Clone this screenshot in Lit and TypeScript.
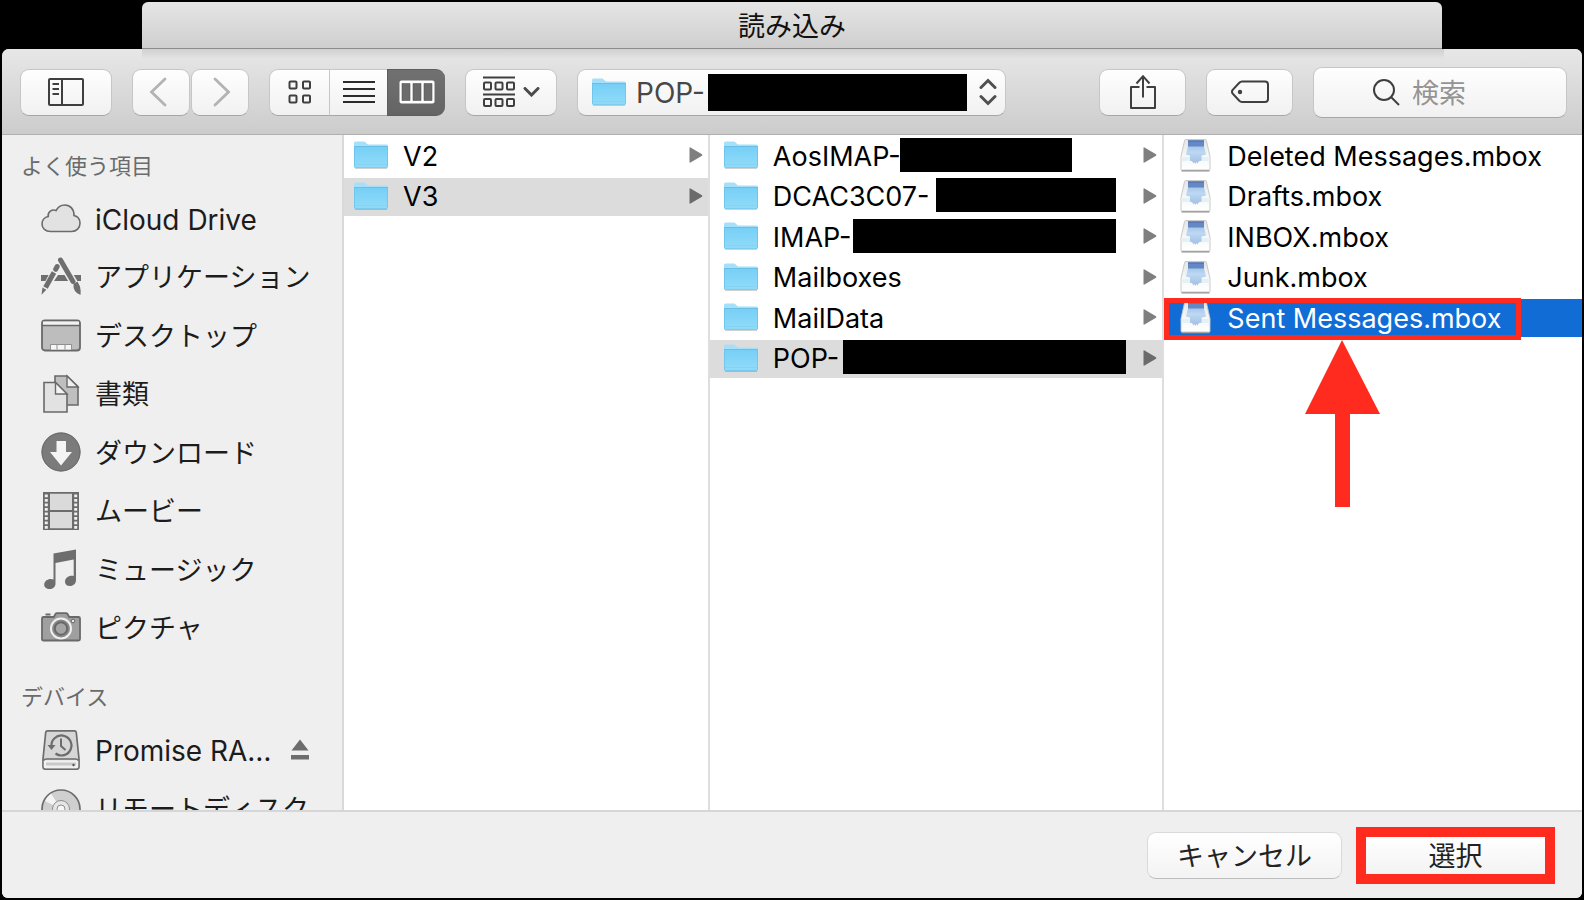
import { LitElement, html, css, svg, nothing } from "lit";
import { customElement, property, state } from "lit/decorators.js";
import { classMap } from "lit/directives/class-map.js";
import { styleMap } from "lit/directives/style-map.js";

const folderIcon = () => html`
  <svg class="folder" width="34" height="28" viewBox="0 0 34 28" aria-hidden="true">
    <defs>
      <linearGradient id="f" x1="0" y1="0" x2="0" y2="1">
        <stop offset="0" stop-color="#76cff5" />
        <stop offset="1" stop-color="#92dcfa" />
      </linearGradient>
    </defs>
    <path d="M1 27.5h32" stroke="#000" stroke-opacity=".18" stroke-width="1" />
    <path d="M0 2Q0 .5 1.5 .5h8.2q1 0 1.700 .7l1.600 1.600q.7 .6 1.700 .6H32.500q1.500 0 1.500 1.500V8H0z" fill="#a5dffa" />
    <path d="M0 5.500H34V25.500q0 1.300-1.300 1.300H1.300Q0 26.800 0 25.500z" fill="url(#f)" />
    <path d="M0 5.500H34" stroke="#69bfe6" />
    <path d="M0 23.500H34" stroke="#7fd0f3" stroke-opacity=".7" />
    <path d="M.5 6v19.500q0 .9 .9 .9H32.600q.9 0 .9-.9V6" fill="none" stroke="#6cc3ea" stroke-opacity=".8" />
  </svg>`;

const mailboxIcon = () => html`
  <svg class="mailbox" width="34" height="34" viewBox="0 0 34 34" aria-hidden="true">
    <defs>
      <linearGradient id="m" x1="0" y1="0" x2="0" y2="1">
        <stop offset="0" stop-color="#e4e4e4" />
        <stop offset=".5" stop-color="#f4f6f7" />
        <stop offset="1" stop-color="#fff" />
      </linearGradient>
      <linearGradient id="w" x1="0" y1="0" x2="0" y2="1">
        <stop offset="0" stop-color="#8fb4e2" />
        <stop offset=".5" stop-color="#bdd8f2" />
        <stop offset="1" stop-color="#9fbde6" />
      </linearGradient>
    </defs>
    <path d="M3.500 32.700h28" stroke="#8b8b8b" stroke-width="1.500" />
    <path d="M7.500 1.500h20q.8 0 .9 .9L32 18.500V31.200q0 .8-.8 .8H3.800q-.8 0-.8-.8V18.500L6.600 2.400q.1-.9 .9-.9z" fill="url(#m)" stroke="#c4c4c4" stroke-width=".9" />
    <path d="M3.500 19h28v4h-28z" fill="#e6f1f5" />
    <path d="M10 2.500h16V8.500L28 16.500 23.500 17.500V22.500L20.500 23.500 19.500 25.500 18.500 24 17.500 26 16.500 24 15.500 25.500 14.500 23.500 12 22.500V17.500L8 16.500 10 8.500z" fill="url(#w)" />
    <path d="M10 2.500h16V8.500H10z" fill="#6488c4" />
    <path d="M10 3h16" stroke="#4c6ba5" />
  </svg>`;

const sidebarIcons: Record<string, unknown> = {
  cloud: svg`<path d="M9.500 33.500C4.500 33.500 1 30.200 1 26c0-3.800 2.600-6.800 6.200-7.500C6.500 14 11 10.800 15 12.600 17 8.700 20.300 7 23.800 7c5.400 0 9.400 4.200 9.200 10.500 3.600 .8 6 3.900 6 7.800 0 4.700-3.500 8.200-8.300 8.200z" fill="#e2e2e2" stroke="#6b6b6b" stroke-width="1.600"/>`,
  apps: svg`<path d="M0 18h11v6H0zM29 18h11v6H29zM17 18h8l3 6H13z" fill="#6e6e6e"/>
    <path d="M19.500 3.500L33.500 27" stroke="#efefef" stroke-width="8"/><path d="M19.500 3L32 24.500" stroke="#6e6e6e" stroke-width="5" stroke-linecap="round"/>
    <path d="M32.500 27l4-2.500 2.500 5q1 4 .5 8.500-4-1.500-5.500-4-2-3-1.500-7z" fill="#6e6e6e"/>
    <path d="M17 8L2 36" stroke="#efefef" stroke-width="7"/><path d="M16.200 9.500l-1.500 2.800" stroke="#6e6e6e" stroke-width="5" stroke-linecap="round"/><path d="M13 15.500L4.500 30.500" stroke="#6e6e6e" stroke-width="5"/><path d="M1.500 30.500l3.800 2.200-4.800 5z" fill="#6e6e6e"/>`,
  desktop: svg`<rect x="1" y="5.500" width="38" height="30" rx="3" fill="#bdbdbd" stroke="#696969" stroke-width="1.800"/><path d="M2 6.500h36V10H2z" fill="#f2f2f2"/><path d="M1 10.500h38" stroke="#696969" stroke-width="1.500"/><path d="M10 30h20v4.600H10z" fill="#f6f6f6"/><path d="M9.500 34.600V29.500h21v5.100M16 30v4.600M24 30v4.600" fill="none" stroke="#909090"/>`,
  docs: svg`<path d="M14 2h12l11 10.500V31H14z" fill="#bfbfbf" stroke="#696969" stroke-width="1.600"/><path d="M26 2v11h11z" fill="#efefef" stroke="#696969" stroke-width="1.400"/><path d="M3 8.500h11.500L26 20V38H3z" fill="#e2e2e2" stroke="#696969" stroke-width="1.600"/><path d="M14.500 8.500V20H26z" fill="#f3f3f3" stroke="#696969" stroke-width="1.400"/>`,
  downloads: svg`<circle cx="20" cy="20" r="19.500" fill="#7b7b7b"/><circle cx="20" cy="20" r="19" fill="none" stroke="#6a6a6a"/><path d="M15.500 9h9.500v11h6L20 33.500 9 20h6.500z" fill="#f4f4f4"/>`,
  movies: svg`<rect x="2" y="1" width="36" height="38" fill="#6c6c6c"/><path d="M9 2.800h22v16.200H9zM9 21h22v16.200H9z" fill="#dadada"/><path d="M5.300 3.500V38M34.700 3.500V38" stroke="#f0f0f0" stroke-width="3" stroke-dasharray="2.800 1.700"/>`,
  music: svg`<path d="M12.500 4.500L35 .500V31c0 3.500-2.500 6-6 6-3 0-5-1.500-5-4.300 0-3.500 3.200-6 6.500-6 .9 0 1.500 .1 2.200 .4V10.500L14.500 14v20.500c0 3.500-2.500 5.500-6 5.500-3 0-5.300-1.500-5.300-4.200 0-3.400 3-5.800 6.800-5.800 .9 0 1.700 .2 2.500 .5z" fill="#6e6e6e"/>`,
  pictures: svg`<path d="M4.500 6.500h5" stroke="#696969" stroke-width="2"/><path d="M2.500 9h10.300l1.700-3q.5-.9 1.500-.9H25q1 0 1.500 .9l1.700 3h9.300Q39 9 39 10.500V31q0 1.500-1.500 1.500h-35Q1 32.500 1 31V10.500Q1 9 2.500 9z" fill="#9f9f9f" stroke="#696969" stroke-width="1.800"/><circle cx="20" cy="20.500" r="10" fill="#8a8a8a" stroke="#f0f0f0" stroke-width="2"/><circle cx="20" cy="20.500" r="6.200" fill="#a5a5a5" stroke="#696969" stroke-width="2"/><circle cx="32" cy="13" r="1.800" fill="#e9e9e9" stroke="#696969"/>`,
  drive: svg`<path d="M6.500 .900h27q1.500 0 1.800 1.600L38 29v8q0 2.200-2.200 2.200H4.200Q2 39.200 2 37V29L4.700 2.500Q5 .900 6.500 .900z" fill="#d6d6d6" stroke="#6c6c6c" stroke-width="1.700"/><path d="M2.800 30.300h34.400v6.500q0 1.500-1.500 1.500H4.300q-1.500 0-1.500-1.500z" fill="#f1f1f1"/><path d="M2.500 30.500Q3.500 29 5.500 29h29q2 0 3 1.500" fill="none" stroke="#6c6c6c" stroke-width="1.500"/><path d="M5 34h30" stroke="#c9c9c9" stroke-width="3"/><circle cx="32.500" cy="35" r="1.200" fill="#555"/><path d="M10.500 16.500a10 10 0 1 1 4 7" fill="none" stroke="#6c6c6c" stroke-width="2.200"/><path d="M6.500 15h8l-4 5z" fill="#6c6c6c"/><path d="M20 8.500v7.500l4.500 4" fill="none" stroke="#6c6c6c" stroke-width="2"/>`,
  disc: svg`<circle cx="20" cy="20" r="19" fill="#cfcfcf" stroke="#6c6c6c" stroke-width="1.700"/><path d="M20 20L4 12a18 18 0 0 1 6-7.500z" fill="#f4f4f4"/><path d="M20 20L36 28a18 18 0 0 1-6 7.500z" fill="#f4f4f4"/><circle cx="20" cy="20" r="8.500" fill="#e6e6e6" stroke="#8e8e8e"/><circle cx="20" cy="20" r="4" fill="#f6f6f6" stroke="#8e8e8e"/>`,
};

const stroke = "#3f3f3f";

interface Entry {
  name: string;
  /* Start (from the name's left edge) and length of the redaction bar. */
  redacted?: { start: number; length: number };
}

@customElement("finder-sidebar")
class FinderSidebar extends LitElement {
  static styles = css`
    :host {
      display: block;
      background: #efefef;
      border-right: 2px solid #d9d9d9;
      padding-top: 8px;
      overflow: hidden;
      box-sizing: border-box;
    }
    h2 {
      margin: 0;
      padding-left: 19px;
      font-size: 22px;
      font-weight: 400;
      line-height: 46px;
      color: #6b6b6b;
    }
    ul {
      list-style: none;
      margin: 0;
      padding: 0;
      display: grid;
      grid-auto-rows: 1fr;
    }
    .favorites {
      height: 468px;
      margin-bottom: 17px;
    }
    .devices {
      height: 118px;
    }
    li {
      display: flex;
      align-items: center;
      padding: 0 34px 0 39px;
    }
    a {
      flex: 1;
      display: flex;
      align-items: center;
      gap: 14px;
      color: #1c1c1c;
      text-decoration: none;
      font-size: 27px;
      line-height: 40px;
      white-space: nowrap;
    }
    a span {
      padding-top: 3px;
    }
    .latin {
      font-size: 28px;
    }
    svg {
      flex: none;
      display: block;
    }
    .eject {
      border: 0;
      padding: 0;
      background: none;
    }
  `;

  private item(icon: string, label: string, ejectable = false) {
    const latin = /^[\x20-\x7e…]+$/.test(label);
    return html`<li>
      <a href="#${icon}"><svg width="40" height="40" viewBox="0 0 40 40" aria-hidden="true">${sidebarIcons[icon]}</svg><span class=${classMap({ latin })}>${label}</span></a>
      ${ejectable
        ? html`<button class="eject" aria-label="取り出す">
            <svg width="18" height="21" viewBox="0 0 18 21"><path d="M9 .5L17.500 11.500H.5zM0 16h18v4.500H0z" fill="#6c6c6c" /></svg>
          </button>`
        : nothing}
    </li>`;
  }

  render() {
    return html`
      <h2>よく使う項目</h2>
      <ul class="favorites">
        ${this.item("cloud", "iCloud Drive")} ${this.item("apps", "アプリケーション")}
        ${this.item("desktop", "デスクトップ")} ${this.item("docs", "書類")}
        ${this.item("downloads", "ダウンロード")} ${this.item("movies", "ムービー")}
        ${this.item("music", "ミュージック")} ${this.item("pictures", "ピクチャ")}
      </ul>
      <h2>デバイス</h2>
      <ul class="devices">
        ${this.item("drive", "Promise RA…", true)} ${this.item("disc", "リモートディスク")}
      </ul>
    `;
  }
}

@customElement("finder-column")
class FinderColumn extends LitElement {
  @property({ attribute: false }) entries: Entry[] = [];
  @property() kind: "folder" | "mailbox" = "folder";
  @property() selected = "";
  @property({ type: Boolean }) marked = false;

  static styles = css`
    :host {
      display: block;
      min-width: 0;
      box-sizing: border-box;
      padding-top: 2px;
      background: #fff;
    }
    ul {
      list-style: none;
      margin: 0;
      padding: 0;
      height: 243px;
      display: grid;
      grid-template-rows: repeat(6, 1fr);
    }
    li {
      position: relative;
    }
    .row {
      width: 100%;
      height: 38px;
      display: flex;
      align-items: center;
      gap: 15px;
      border: 0;
      padding: 0 5px 2px var(--inset, 14px);
      background: none;
      color: #000;
      font: inherit;
      font-size: 27px;
      line-height: 36px;
      text-align: left;
      white-space: nowrap;
    }
    .row.selected {
      background: #dcdcdc;
    }
    .row.selected.active {
      background: #116cd6;
      color: #fff;
    }
    .name {
      position: relative;
      flex: 1;
      padding-top: 3px;
    }
    .bar {
      position: absolute;
      top: 2px;
      height: 34px;
      background: #000;
    }
    svg {
      flex: none;
      display: block;
    }
    .frame {
      position: absolute;
      left: 0;
      top: -1px;
      width: 357px;
      height: 42px;
      box-sizing: border-box;
      border: 5px solid #ff2b1e;
      pointer-events: none;
    }
    .pointer {
      position: absolute;
      left: 141px;
      top: 41px;
      pointer-events: none;
    }
  `;

  render() {
    const folder = this.kind === "folder";
    return html`<ul>
      ${this.entries.map((e) => {
        const selected = e.name === this.selected;
        return html`<li>
          <button class=${classMap({ row: true, selected, active: !folder })} aria-pressed=${selected}>
            ${folder ? folderIcon() : mailboxIcon()}
            <span class="name"
              >${e.name}${e.redacted
                ? html`<span class="bar" style=${styleMap({ left: `${e.redacted.start}px`, width: `${e.redacted.length}px` })}></span>`
                : nothing}</span
            >
            ${folder
              ? html`<svg width="14" height="16" viewBox="0 0 14 16" aria-hidden="true">
                  <path d="M.5 1Q.5 0 1.500 .5L13 7.300q.8 .7 0 1.400L1.500 15.500Q.5 16 .5 15z" fill=${selected ? "#6b6b6b" : "#7f7f7f"} />
                </svg>`
              : nothing}
          </button>
          ${selected && this.marked
            ? html`<span class="frame"></span>
                <svg class="pointer" width="75" height="167" viewBox="0 0 75 167" aria-hidden="true">
                  <path d="M37 0L75 74H45V167H30V74H0z" fill="#ff2b1e" />
                </svg>`
            : nothing}
        </li>`;
      })}
    </ul>`;
  }
}

@customElement("app-root")
class AppRoot extends LitElement {
  @state() private view = "columns";

  private readonly versions: Entry[] = [{ name: "V2" }, { name: "V3" }];
  private readonly accounts: Entry[] = [
    { name: "AosIMAP-", redacted: { start: 127, length: 172 } },
    { name: "DCAC3C07-", redacted: { start: 163, length: 180 } },
    { name: "IMAP-", redacted: { start: 80, length: 263 } },
    { name: "Mailboxes" },
    { name: "MailData" },
    { name: "POP-", redacted: { start: 70, length: 283 } },
  ];
  private readonly mailboxes: Entry[] = [
    { name: "Deleted Messages.mbox" },
    { name: "Drafts.mbox" },
    { name: "INBOX.mbox" },
    { name: "Junk.mbox" },
    { name: "Sent Messages.mbox" },
  ];

  static styles = css`
    :host {
      display: flex;
      flex-direction: column;
      height: 100vh;
      box-sizing: border-box;
      padding: 2px;
      background: #000;
      font-family: Inter, "Noto Sans CJK JP", sans-serif;
      font-weight: 400;
    }
    .title {
      margin: 0 140px;
      height: 46px;
      border-bottom: 1px solid #8c8c8c;
      border-radius: 6px 6px 0 0;
      background: linear-gradient(#e5e5e5, #cfcfcf);
      font-size: 27px;
      font-weight: 400;
      line-height: 49px;
      text-align: center;
      color: #111;
    }
    .window {
      flex: 1;
      min-height: 0;
      display: flex;
      flex-direction: column;
      border-radius: 7px 7px 6px 6px;
      overflow: hidden;
      background: #efefef;
    }
    .toolbar {
      position: relative;
      display: flex;
      align-items: center;
      gap: 20px;
      height: 86px;
      box-sizing: border-box;
      padding: 1px 15px 0 18px;
      border-bottom: 1px solid #b0b0b0;
      background: linear-gradient(#e7e7e7, #cccccc);
    }
    .toolbar::before {
      content: "";
      position: absolute;
      left: 140px;
      right: 138px;
      top: 0;
      height: 10px;
      background: linear-gradient(rgba(0, 0, 0, 0.1), rgba(0, 0, 0, 0));
    }
    button,
    select,
    input {
      font: inherit;
      margin: 0;
    }
    .btn,
    .field {
      display: flex;
      align-items: center;
      justify-content: center;
      box-sizing: border-box;
      height: 47px;
      padding: 0;
      border: 1px solid #c6c6c6;
      border-bottom-color: #a6a6a6;
      border-radius: 9px;
      background: linear-gradient(#fefefe, #f1f1f1);
    }
    svg {
      flex: none;
      display: block;
    }
    .wide {
      width: 92px;
    }
    .action {
      width: 87px;
    }
    .pair {
      display: flex;
      gap: 1px;
    }
    .pair .btn {
      width: 58px;
    }
    .segments {
      display: flex;
    }
    .segments .btn {
      width: 58px;
      border-radius: 0;
      border-right-width: 0;
    }
    .segments .btn:first-child {
      width: 60px;
      border-radius: 9px 0 0 9px;
    }
    .segments .btn:last-child {
      border-radius: 0 9px 9px 0;
    }
    .segments .on {
      border-color: #5d5d5d;
      background: linear-gradient(#717171, #646464);
    }
    .arrange {
      gap: 8px;
    }
    .location {
      flex: 0 1 429px;
      justify-content: flex-start;
      padding: 0 8px 0 14px;
      gap: 3px;
    }
    .location select {
      appearance: none;
      border: 0;
      margin-left: 7px;
      padding: 2px 0 0;
      background: none;
      color: #474747;
      font-size: 28px;
      line-height: 40px;
    }
    .location .bar {
      flex: 0 1 259px;
      height: 37px;
      background: #000;
    }
    .location .updown {
      margin-left: auto;
    }
    .trailing {
      display: flex;
      align-items: center;
      gap: 20px;
      margin-left: auto;
    }
    .search {
      width: 254px;
      height: 51px;
      justify-content: flex-start;
      padding-left: 58px;
      gap: 12px;
    }
    .search input {
      flex: 1;
      min-width: 0;
      border: 0;
      padding: 3px 0 0;
      outline: 0;
      background: none;
      font-size: 27px;
      line-height: 40px;
      color: #333;
    }
    .search input::placeholder {
      color: #949494;
      opacity: 1;
    }
    .browser {
      flex: 1;
      min-height: 0;
      display: flex;
      overflow: hidden;
    }
    finder-sidebar {
      flex: 0 0 342px;
    }
    finder-column + finder-column {
      border-left: 2px solid #dedede;
    }
    .first {
      flex: 365 1 0;
      --inset: 10px;
    }
    .second {
      flex: 454 1 0;
    }
    .third {
      flex: 419 1 0;
    }
    .footer {
      display: flex;
      align-items: center;
      justify-content: flex-end;
      gap: 14px;
      height: 88px;
      box-sizing: border-box;
      border-top: 2px solid #d6d6d6;
      padding: 0 27px 0 0;
      background: #efefef;
    }
    .footer .btn {
      width: 195px;
      padding-top: 3px;
      font-size: 27px;
      line-height: 40px;
      color: #222;
      border-color: #dadada;
      border-bottom-color: #bdbdbd;
      background: linear-gradient(#fff, #f3f3f3);
    }
    .footer .choose {
      width: 199px;
      height: 57px;
      border: 10px solid #ff2b1e;
      border-radius: 0;
    }
  `;

  private seg(id: string, label: string, icon: unknown) {
    return html`<button
      class=${classMap({ btn: true, on: this.view === id })}
      aria-label=${label}
      aria-pressed=${this.view === id}
      @click=${() => (this.view = id)}
    >
      ${icon}
    </button>`;
  }

  render() {
    return html`
      <h1 class="title">読み込み</h1>
      <main class="window">
        <div class="toolbar">
          <button class="btn wide" aria-label="サイドバー">
            <svg width="36" height="28" viewBox="0 0 36 28" fill="none" stroke=${stroke} stroke-width="2">
              <rect x="1" y="1" width="34" height="26" rx="1" />
              <path d="M14 1V27" /><path d="M4.500 6H11M4.500 11H11M4.500 16H11" />
            </svg>
          </button>
          <div class="pair">
            <button class="btn" aria-label="戻る">
              <svg width="24" height="30" viewBox="0 0 24 30" fill="none" stroke="#b3b3b3" stroke-width="2.800"><path d="M16 2L2.500 15 16 28" stroke-linecap="round" /></svg>
            </button>
            <button class="btn" aria-label="進む">
              <svg width="24" height="30" viewBox="0 0 24 30" fill="none" stroke="#b3b3b3" stroke-width="2.800"><path d="M7 2L20.500 15 7 28" stroke-linecap="round" /></svg>
            </button>
          </div>
          <div class="segments">
            ${this.seg("icons", "アイコン", html`<svg width="24" height="24" viewBox="0 0 24 24" fill="none" stroke=${stroke} stroke-width="2">
              <rect x="1.500" y="1.500" width="7" height="7" rx="1" /><rect x="15" y="1.500" width="7" height="7" rx="1" />
              <rect x="1.500" y="15.500" width="7" height="7" rx="1" /><rect x="15" y="15.500" width="7" height="7" rx="1" />
            </svg>`)}
            ${this.seg("list", "リスト", html`<svg width="32" height="24" viewBox="0 0 32 24" stroke="#2c2c2c" stroke-width="2"><path d="M0 2H32M0 9H32M0 16H32M0 22H32" /></svg>`)}
            ${this.seg("columns", "カラム", html`<svg width="38" height="26" viewBox="0 0 38 26">
              <rect x="1.500" y="1.500" width="35" height="23" rx="2" fill="#fff" />
              <path d="M4 4.500h8v17H4zM15 4.500h8v17h-8zM26 4.500h8v17h-8z" fill="#6b6b6b" stroke="#555" stroke-width=".6" />
            </svg>`)}
          </div>
          <button class="btn wide arrange" aria-label="グループ">
            <svg width="32" height="32" viewBox="0 0 32 32" fill="none" stroke=${stroke} stroke-width="2">
              <path d="M0 1.500H32M0 18.500H32" />
              <rect x="1" y="6.500" width="7" height="7" rx="1" /><rect x="12.500" y="6.500" width="7" height="7" rx="1" /><rect x="24" y="6.500" width="7" height="7" rx="1" />
              <rect x="1" y="23" width="7" height="7" rx="1" /><rect x="12.500" y="23" width="7" height="7" rx="1" /><rect x="24" y="23" width="7" height="7" rx="1" />
            </svg>
            <svg width="17" height="10" viewBox="0 0 17 10" fill="none" stroke="#4b4b4b" stroke-width="3" stroke-linecap="round"><path d="M2 1.500l6.500 6.500L15 1.500" /></svg>
          </button>
          <div class="field location">
            ${folderIcon()}
            <select aria-label="場所"><option>POP-</option></select>
            <span class="bar"></span>
            <svg class="updown" width="18" height="28" viewBox="0 0 18 28" fill="none" stroke="#505050" stroke-width="3" stroke-linecap="round" aria-hidden="true">
              <path d="M2 9.500L9 2.500 16 9.500M2 18.500L9 25.500 16 18.500" />
            </svg>
          </div>
          <div class="trailing">
            <button class="btn action" aria-label="共有">
              <svg width="26" height="36" viewBox="0 0 26 36" fill="none" stroke=${stroke} stroke-width="2">
                <path d="M9.500 13H1V34H25V13H16.500" stroke-linejoin="round" /><path d="M13 2.500V23.500M6.500 9.500L13 2.200 19.500 9.500" />
              </svg>
            </button>
            <button class="btn action" aria-label="タグ">
              <svg width="38" height="24" viewBox="0 0 38 24" fill="none" stroke=${stroke} stroke-width="2">
                <path d="M11 1.500H34q3 0 3 3V19q0 3-3 3H11Q9.500 22 8.300 20.800L1.500 13.500q-1-1.700 0-3.500L8.300 2.800Q9.500 1.500 11 1.500z" /><circle cx="9" cy="12" r="2.200" fill=${stroke} stroke="none" />
              </svg>
            </button>
            <label class="field search">
              <svg width="28" height="28" viewBox="0 0 28 28" fill="none" stroke=${stroke} stroke-width="2" aria-hidden="true"><circle cx="12" cy="12" r="10" /><path d="M19 19l8 8" /></svg>
              <input type="search" placeholder="検索" aria-label="検索" />
            </label>
          </div>
        </div>
        <div class="browser">
          <finder-sidebar></finder-sidebar>
          <finder-column class="first" .entries=${this.versions} selected="V3"></finder-column>
          <finder-column class="second" .entries=${this.accounts} selected="POP-"></finder-column>
          <finder-column class="third" kind="mailbox" marked .entries=${this.mailboxes} selected="Sent Messages.mbox"></finder-column>
        </div>
        <div class="footer">
          <button class="btn">キャンセル</button>
          <button class="btn choose">選択</button>
        </div>
      </main>
    `;
  }
}
